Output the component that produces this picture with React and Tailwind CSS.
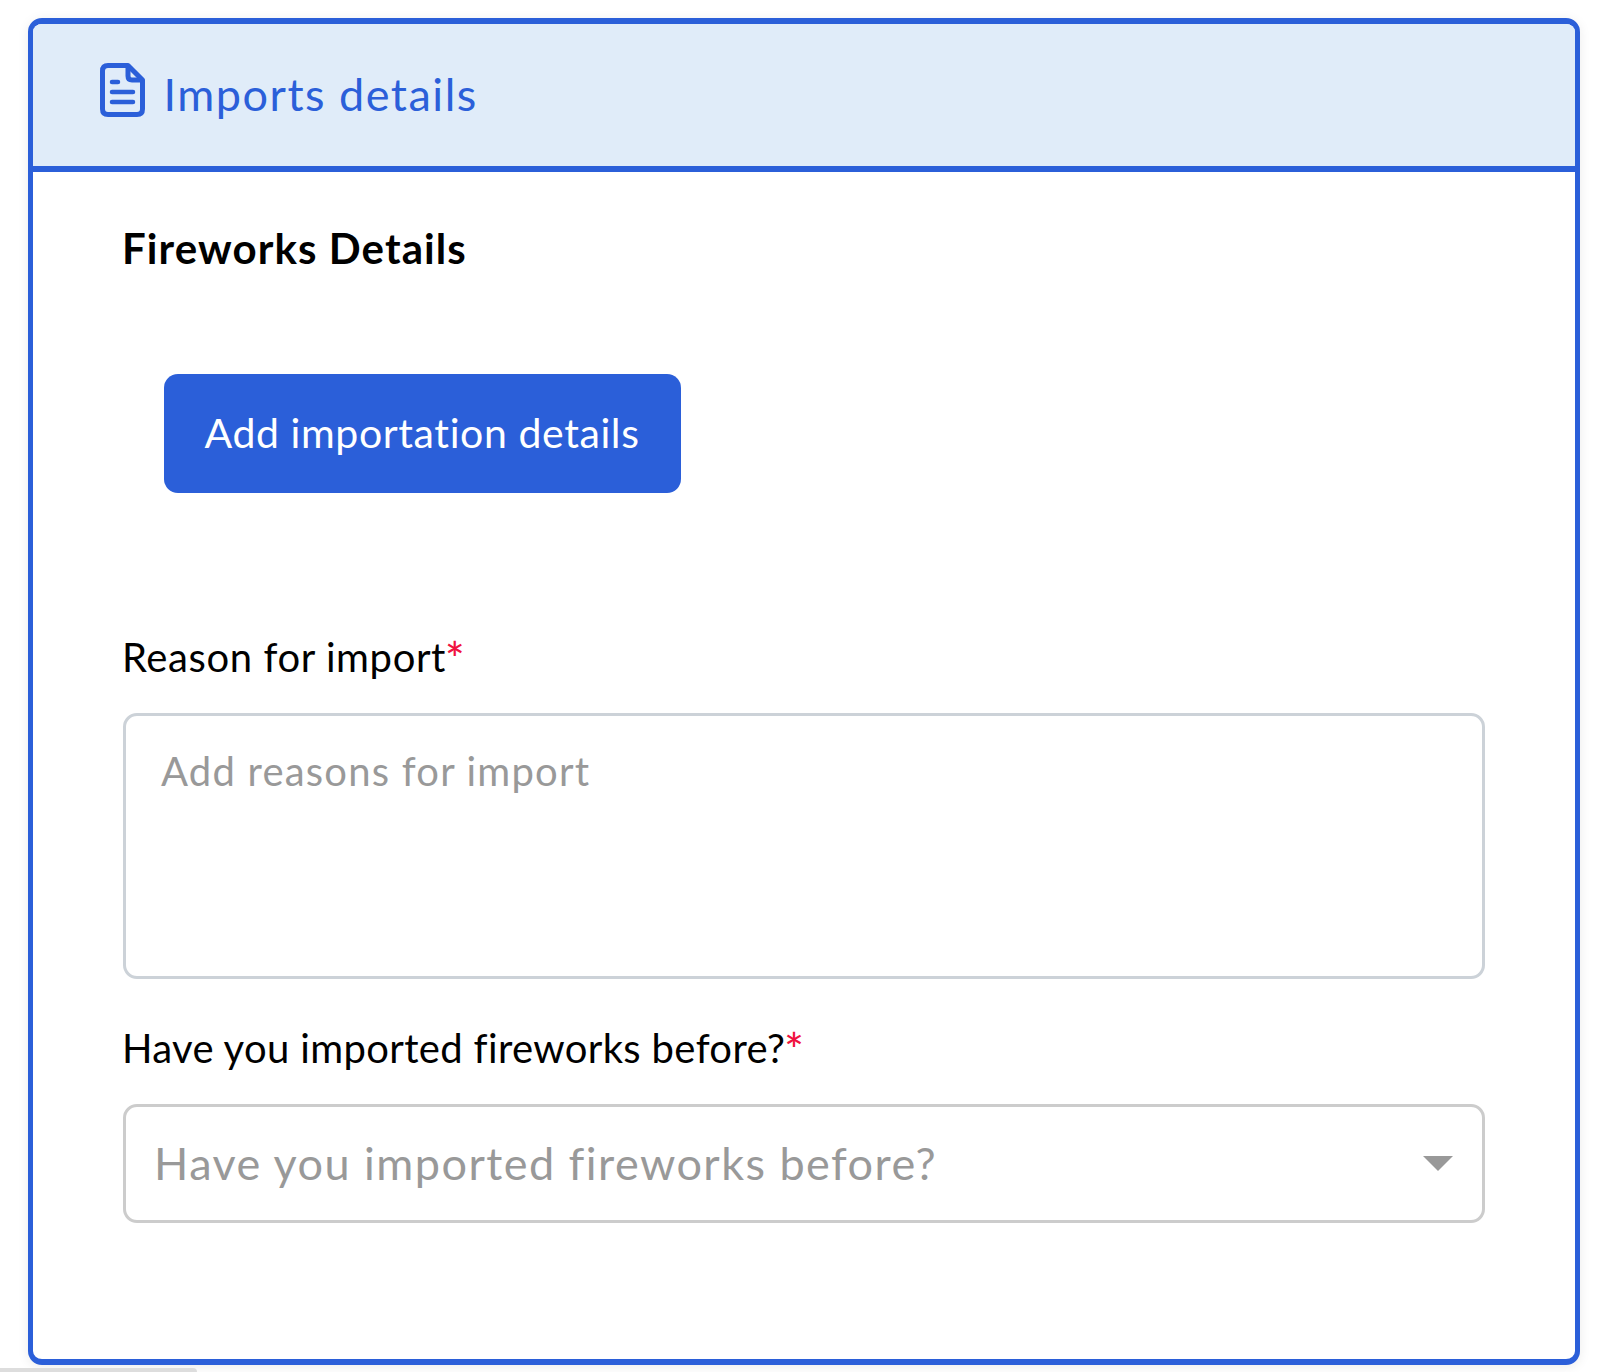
import React from 'react';

const FileIcon = () => (
    <svg width="45" height="54" viewBox="0 0 45 54" fill="none" className="shrink-0">
        <path d="M8 2.5H28L42.5 17V46C42.5 49.5 40.5 51.5 37 51.5H8C4.5 51.5 2.5 49.5 2.5 46V8C2.5 4.5 4.5 2.5 8 2.5Z" stroke="#2b5fd9" strokeWidth="5" strokeLinejoin="round" />
        <path d="M28 3V13C28 16 29.5 17 32 17H42" stroke="#2b5fd9" strokeWidth="5" strokeLinejoin="round" />
        <path d="M12 19H18M12 29H33M12 39H33" stroke="#2b5fd9" strokeWidth="4.5" strokeLinecap="round" />
    </svg>
);

const Required = () => <span className="text-[#f0123f] text-[46px] leading-none font-medium ml-[-1px] align-[-4px]">*</span>;

const App = () => {
    return (
        <div className="relative w-[1600px] h-[1372px] overflow-hidden bg-white pt-[18px] pl-[28px] font-['Lato','Liberation_Sans',sans-serif] [font-variant-ligatures:none]">
            <div className="w-[1552px] h-[1347px] rounded-[14px] border-y-[6px] border-x-[5.5px] border-[#2b5fd9] bg-white shadow-[0_2px_12px_rgba(0,0,0,0.08)] overflow-hidden">
                <div className="h-[148px] bg-[#e0ecf9] border-b-[6px] border-[#2b5fd9] flex items-center pl-[66.5px] pb-[10px]">
                    <FileIcon />
                    <h2 className="ml-[19px] mt-[9px] text-[45px] leading-none tracking-[1.5px] text-[#2b5fd9]">Imports details</h2>
                </div>
                <div className="pl-[89px] pr-[89px]">
                    <h3 className="mt-[51px] text-[42px] leading-[50px] font-bold tracking-[1.1px] text-black">Fireworks Details</h3>
                    <button className="block mt-[101px] ml-[41.5px] w-[517px] h-[119px] pb-[2px] rounded-[14px] bg-[#2b5fd9] text-white text-[41px] tracking-[0.6px]">
                        Add importation details
                    </button>
                    <label className="block mt-[140px] text-[40px] leading-[48px] tracking-[0.6px] text-black">Reason for import<Required /></label>
                    <textarea
                        readOnly
                        placeholder="Add reasons for import"
                        className="block mt-[31px] ml-[1px] w-[1362px] h-[266px] rounded-[14px] border-[3px] border-[#ccd2d8] pl-[35px] pr-[35px] pt-[31px] pb-[31px] text-[40px] leading-[48px] tracking-[1.2px] outline-none resize-none placeholder:text-[#999999]"
                    />
                    <label className="block mt-[45px] text-[40px] leading-[48px] tracking-[0.35px] text-black">Have you imported fireworks before?<Required /></label>
                    <div className="mt-[31px] ml-[1px] w-[1362px] h-[119px] rounded-[14px] border-[3px] border-[#cccccc] flex items-center justify-between pl-[28px] pr-[29px]">
                        <span className="text-[45px] tracking-[1.45px] text-[#999999]">Have you imported fireworks before?</span>
                        <svg width="30" height="15" viewBox="0 0 30 15"><path d="M0 0H30L15 15Z" fill="#999999" /></svg>
                    </div>
                </div>
            </div>
            <div className="absolute left-0 bottom-0 w-[197px] h-[4px] bg-[#dddddd] rounded-tr-[4px]" />
        </div>
    );
};

export default App;
